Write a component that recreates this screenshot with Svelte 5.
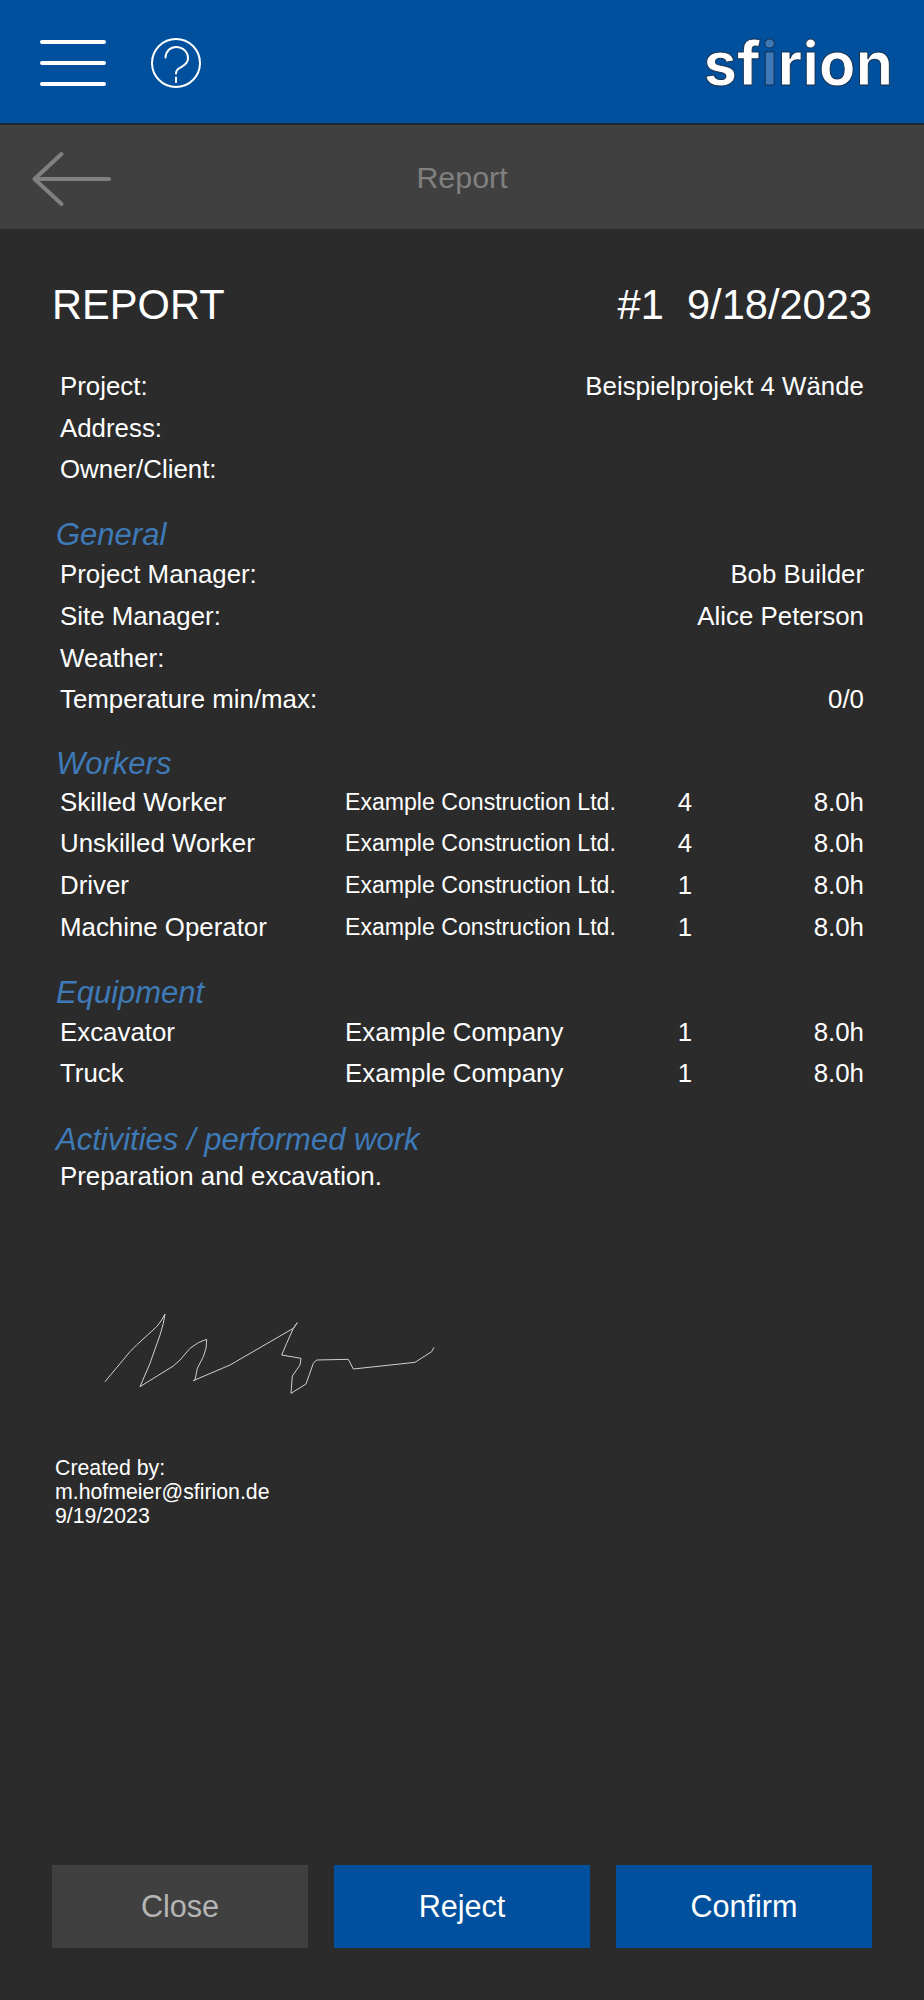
<script lang="ts">
  const general = [
    { label: 'Project Manager:', value: 'Bob Builder' },
    { label: 'Site Manager:', value: 'Alice Peterson' },
    { label: 'Weather:', value: '' },
    { label: 'Temperature min/max:', value: '0/0' },
  ]
  const workers = [
    { name: 'Skilled Worker', company: 'Example Construction Ltd.', count: 4, hours: '8.0h' },
    { name: 'Unskilled Worker', company: 'Example Construction Ltd.', count: 4, hours: '8.0h' },
    { name: 'Driver', company: 'Example Construction Ltd.', count: 1, hours: '8.0h' },
    { name: 'Machine Operator', company: 'Example Construction Ltd.', count: 1, hours: '8.0h' },
  ]
  const equipment = [
    { name: 'Excavator', company: 'Example Company', count: 1, hours: '8.0h' },
    { name: 'Truck', company: 'Example Company', count: 1, hours: '8.0h' },
  ]
  // signature trace
  const signature =
    '75,275 150,185 170,165 230,110 245,90 255,72 250,100 240,135 210,220 180,290 280,228 300,210 330,175 355,158 380,148 378,175 370,200 352,235 345,270 340,272 450,225 640,115 652,98 640,115 620,160 605,195 663,205 660,225 637,258 633,310 678,282 700,220 710,210 805,208 820,237 1005,217 1055,185 1062,172'
</script>

<div class="page">
  <header class="topbar">
    <svg class="menu" width="68" height="48" viewBox="0 0 68 48" aria-hidden="true">
      <path d="M4 3H66M4 24H66M4 45H66" stroke="#fff" stroke-width="4" stroke-linecap="round" fill="none" />
    </svg>
    <svg class="help" width="50" height="50" viewBox="0 0 50 50" aria-hidden="true">
      <circle cx="25" cy="25" r="24" stroke="#fff" stroke-width="2" fill="none" />
      <path d="M14.500 19.500C15 13 19.500 9 25 9C32 9 37 14 37 20.500C37 26 32 28 28.500 30C26 31.500 25 32.500 25 35.500" stroke="#fff" stroke-width="2" stroke-linecap="round" fill="none" />
      <path d="M25 39.500V44" stroke="#fff" stroke-width="2" stroke-linecap="round" fill="none" />
    </svg>
    <div class="logo">sf<span class="logo-i">i</span>rion</div>
  </header>

  <div class="subbar">
    <svg class="back" width="80" height="58" viewBox="0 0 80 58" aria-hidden="true">
      <path d="M78 29H3.500M30.500 4L3.500 29L30.500 54" stroke="#808080" stroke-width="4" stroke-linecap="round" stroke-linejoin="round" fill="none" />
    </svg>
    <span class="subtitle">Report</span>
  </div>

  <main class="content">
    <div class="title-row">
      <span>REPORT</span>
      <span class="title-right">#1&nbsp;&nbsp;9/18/2023</span>
    </div>

    <section class="rows first">
      <div class="row pair"><span>Project:</span><span>Beispielprojekt 4 Wände</span></div>
      <div class="row pair"><span>Address:</span></div>
      <div class="row pair"><span>Owner/Client:</span></div>
    </section>

    <h2>General</h2>
    <section class="rows">
      {#each general as item}
        <div class="row pair"><span>{item.label}</span><span>{item.value}</span></div>
      {/each}
    </section>

    <h2 class="tight">Workers</h2>
    <section class="rows workers">
      {#each workers as w}
        <div class="row cols">
          <span>{w.name}</span>
          <span class="small">{w.company}</span>
          <span class="count">{w.count}</span>
          <span class="hours">{w.hours}</span>
        </div>
      {/each}
    </section>

    <h2>Equipment</h2>
    <section class="rows">
      {#each equipment as e}
        <div class="row cols">
          <span>{e.name}</span>
          <span>{e.company}</span>
          <span class="count">{e.count}</span>
          <span class="hours">{e.hours}</span>
        </div>
      {/each}
    </section>

    <h2>Activities / performed work</h2>
    <section class="rows">
      <div class="row activity">Preparation and excavation.</div>
    </section>

    <svg class="signature" width="380" height="130" viewBox="0 0 1140 390" aria-hidden="true">
      <polyline points={signature} stroke="#d0d0d0" stroke-width="3" fill="none" stroke-linejoin="round" />
    </svg>

    <div class="created">
      <div>Created by:</div>
      <div>m.hofmeier@sfirion.de</div>
      <div>9/19/2023</div>
    </div>
  </main>

  <footer class="actions">
    <button class="btn muted">Close</button>
    <button class="btn">Reject</button>
    <button class="btn">Confirm</button>
  </footer>
</div>

<style>
  :global(body) { margin: 0; background: #2b2b2b; }
  .page {
    height: 2000px; display: flex; flex-direction: column; background: #2b2b2b; color: #fff;
    font-family: "Liberation Sans", Arial, sans-serif; overflow: hidden;
  }
  .topbar {
    height: 120px; flex-shrink: 0; background: #00509e; border-bottom: 2px solid #1c2733;
    display: flex; align-items: center; padding: 3px 31px 0 38px; box-sizing: content-box;
  }
  .help { margin-left: 45px; }
  .logo {
    margin-left: auto; font-family: Inter, sans-serif; font-weight: 700; font-size: 60px;
    letter-spacing: 0; color: #fff; -webkit-text-stroke: 1px #16304f; line-height: 1;
  }
  .logo-i { color: #3f7ab8; }
  .subbar {
    height: 104px; flex-shrink: 0; background: #404040; position: relative;
    display: flex; align-items: center; justify-content: center;
  }
  .back { position: absolute; left: 31px; top: 25px; }
  .subtitle { color: #808080; font-size: 30.400px; }
  .content { flex: 1; padding: 0 52px; }
  .title-row {
    display: flex; justify-content: space-between; align-items: center;
    font-size: 41.600px; margin-top: 51px; height: 50px;
  }
  .rows { padding: 0 8px; font-size: 25.850px; }
  .rows.first { margin-top: 36px; }
  .rows.workers { margin-top: -1.500px; }
  .row { height: 41.6px; line-height: 41.6px; white-space: nowrap; }
  .pair { display: flex; justify-content: space-between; }
  .cols { display: grid; grid-template-columns: 285px 1fr 40px 159px; }
  .small { font-size: 23.100px; }
  .count { text-align: center; }
  .hours { text-align: right; }
  h2 {
    margin: 0; padding-left: 4px; height: 39px; line-height: 39px; margin-top: 24.600px;
    font-size: 31px; font-weight: 400; font-style: italic; color: #3f7ab8;
  }
  h2.tight { margin-top: 23.600px; }
  .activity { margin-top: -3px; }
  .signature { display: block; margin: 93px 0 0 28px; }
  .created { margin-top: 36px; padding-left: 3px; font-size: 21.300px; line-height: 24px; }
  .actions {
    display: grid; grid-template-columns: repeat(3, 1fr); gap: 26px;
    padding: 0 52px; height: 83px; margin-bottom: 52px; flex-shrink: 0;
  }
  .btn {
    border: 0; background: #00509e; color: #fff; font: inherit; font-size: 30.600px; padding: 0;
  }
  .btn.muted { background: #404040; color: #b5b5b5; }
</style>
